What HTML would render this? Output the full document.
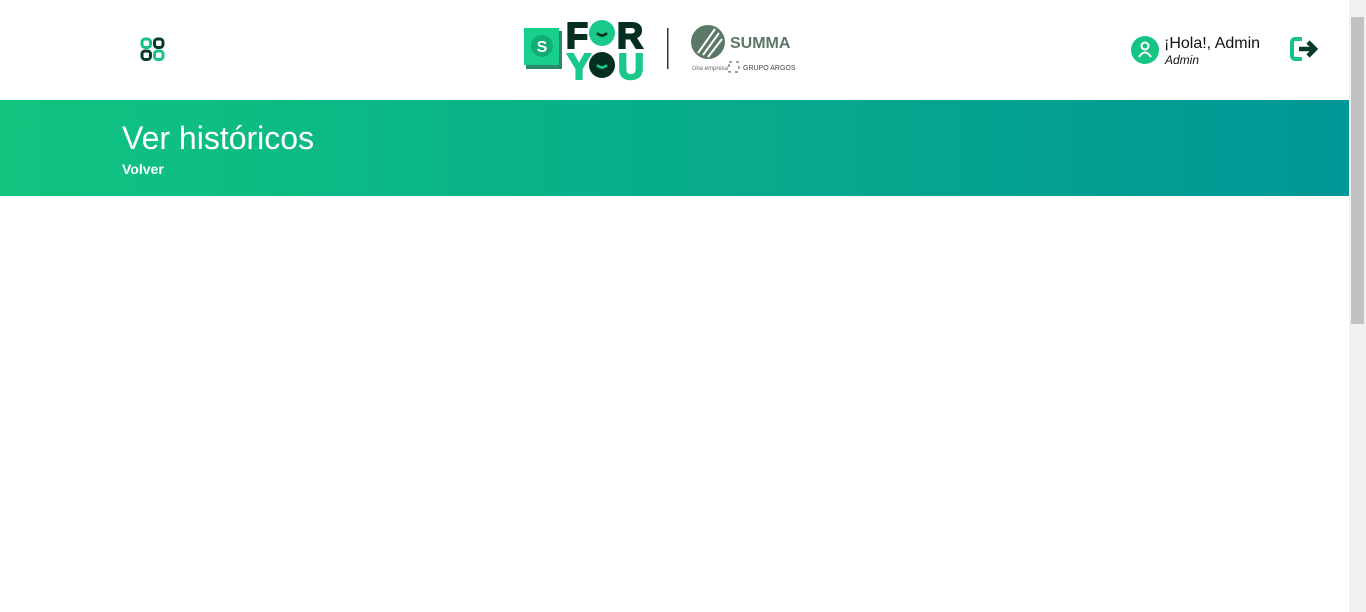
<!DOCTYPE html>
<html><head><meta charset="utf-8"><style>
body{margin:0;width:1366px;height:612px;overflow:hidden;background:#fff;font-family:"Liberation Sans",sans-serif;position:relative}
.hdr{position:absolute;left:0;top:0;width:1349px;height:100px;background:#fff}
.ban{position:absolute;left:0;top:100px;width:1349px;height:96px;background:linear-gradient(90deg,#10c47f,#009696)}
.sb{position:absolute;right:0;top:0;width:17px;height:612px;background:#f1f1f1}
.th{position:absolute;right:2px;top:17px;width:13px;height:307px;background:#c1c1c1}
</style></head><body>
<div class="hdr">
<svg style="position:absolute;left:140px;top:37px" width="26" height="25">
<rect x="2" y="2" width="8.5" height="8.5" rx="3" fill="none" stroke="#13c483" stroke-width="3"/>
<rect x="14.5" y="2" width="8.5" height="8.5" rx="3" fill="none" stroke="#063a2a" stroke-width="3"/>
<rect x="2" y="14" width="8.5" height="8.5" rx="3" fill="none" stroke="#063a2a" stroke-width="3"/>
<rect x="14.5" y="14" width="8.5" height="8.5" rx="3" fill="none" stroke="#13c483" stroke-width="3"/>
</svg>
<svg style="position:absolute;left:520px;top:15px" width="280" height="70">
<rect x="6" y="16" width="36" height="38" fill="#2a8a6a"/>
<rect x="4" y="13" width="35" height="37" fill="#18d08c"/>
<circle cx="22" cy="31" r="11" fill="#0fae73"/>
<text x="22" y="37" font-size="16" font-weight="bold" fill="#fff" text-anchor="middle">S</text>
<text x="46" y="33" font-size="36" font-weight="900" fill="#052e22" font-family="Liberation Sans" stroke="#052e22" stroke-width="2">F</text>
<circle cx="82" cy="18" r="13" fill="#18c98a"/>
<path d="M77 18 q5 5 10 0" stroke="#052e22" stroke-width="2.5" fill="none"/>
<text x="97" y="33" font-size="36" font-weight="900" fill="#052e22" stroke="#052e22" stroke-width="2">R</text>
<text x="47" y="64" font-size="36" font-weight="900" fill="#18c98a" stroke="#18c98a" stroke-width="2">Y</text>
<circle cx="82" cy="50" r="13" fill="#052e22"/>
<path d="M77 50 q5 5 10 0" stroke="#18c98a" stroke-width="2.5" fill="none"/>
<text x="98" y="64" font-size="36" font-weight="900" fill="#18c98a" stroke="#18c98a" stroke-width="2">U</text>
<rect x="147" y="13" width="1.5" height="41" fill="#333"/>
<circle cx="188" cy="27" r="17" fill="#5a7864"/>
<path d="M178 38 L195 14 M183 40 L199 18 M188 42 L202 24" stroke="#fff" stroke-width="2"/>
<text x="210" y="33" font-size="16" font-weight="bold" fill="#5a7864">SUMMA</text>
<text x="172" y="55" font-size="6" fill="#666" font-style="italic">Una empresa</text>
<rect x="209" y="47" width="10" height="10" fill="none" stroke="#444" stroke-dasharray="3 4"/>
<text x="223" y="55" font-size="7" fill="#444">GRUPO ARGOS</text>
</svg>
<svg style="position:absolute;left:1131px;top:36px" width="28" height="28"><circle cx="14" cy="14" r="14" fill="#13c483"/><circle cx="14" cy="10" r="3.5" fill="none" stroke="#fff" stroke-width="2"/><path d="M8 21 q6 -9 12 0" fill="none" stroke="#fff" stroke-width="2"/></svg>
<div style="position:absolute;left:1164px;top:35px;font-size:16px;color:#111">¡Hola!, Admin</div>
<div style="position:absolute;left:1165px;top:53px;font-size:12px;font-style:italic;color:#111">Admin</div>
<svg style="position:absolute;left:1289px;top:36px" width="32" height="26"><path d="M13 3 H6 a3 3 0 0 0 -3 3 V20 a3 3 0 0 0 3 3 H13" fill="none" stroke="#13c483" stroke-width="4"/><path d="M10 13 H24 M19 6 l7 7 -7 7" fill="none" stroke="#063a2a" stroke-width="4.5"/></svg>
</div>
<div class="ban">
<div style="position:absolute;left:122px;top:20px;font-size:32px;color:#fff">Ver históricos</div>
<div style="position:absolute;left:122px;top:61px;font-size:14px;font-weight:bold;color:#fff">Volver</div>
</div>
<div class="sb"><div class="th"></div></div>
</body></html>
